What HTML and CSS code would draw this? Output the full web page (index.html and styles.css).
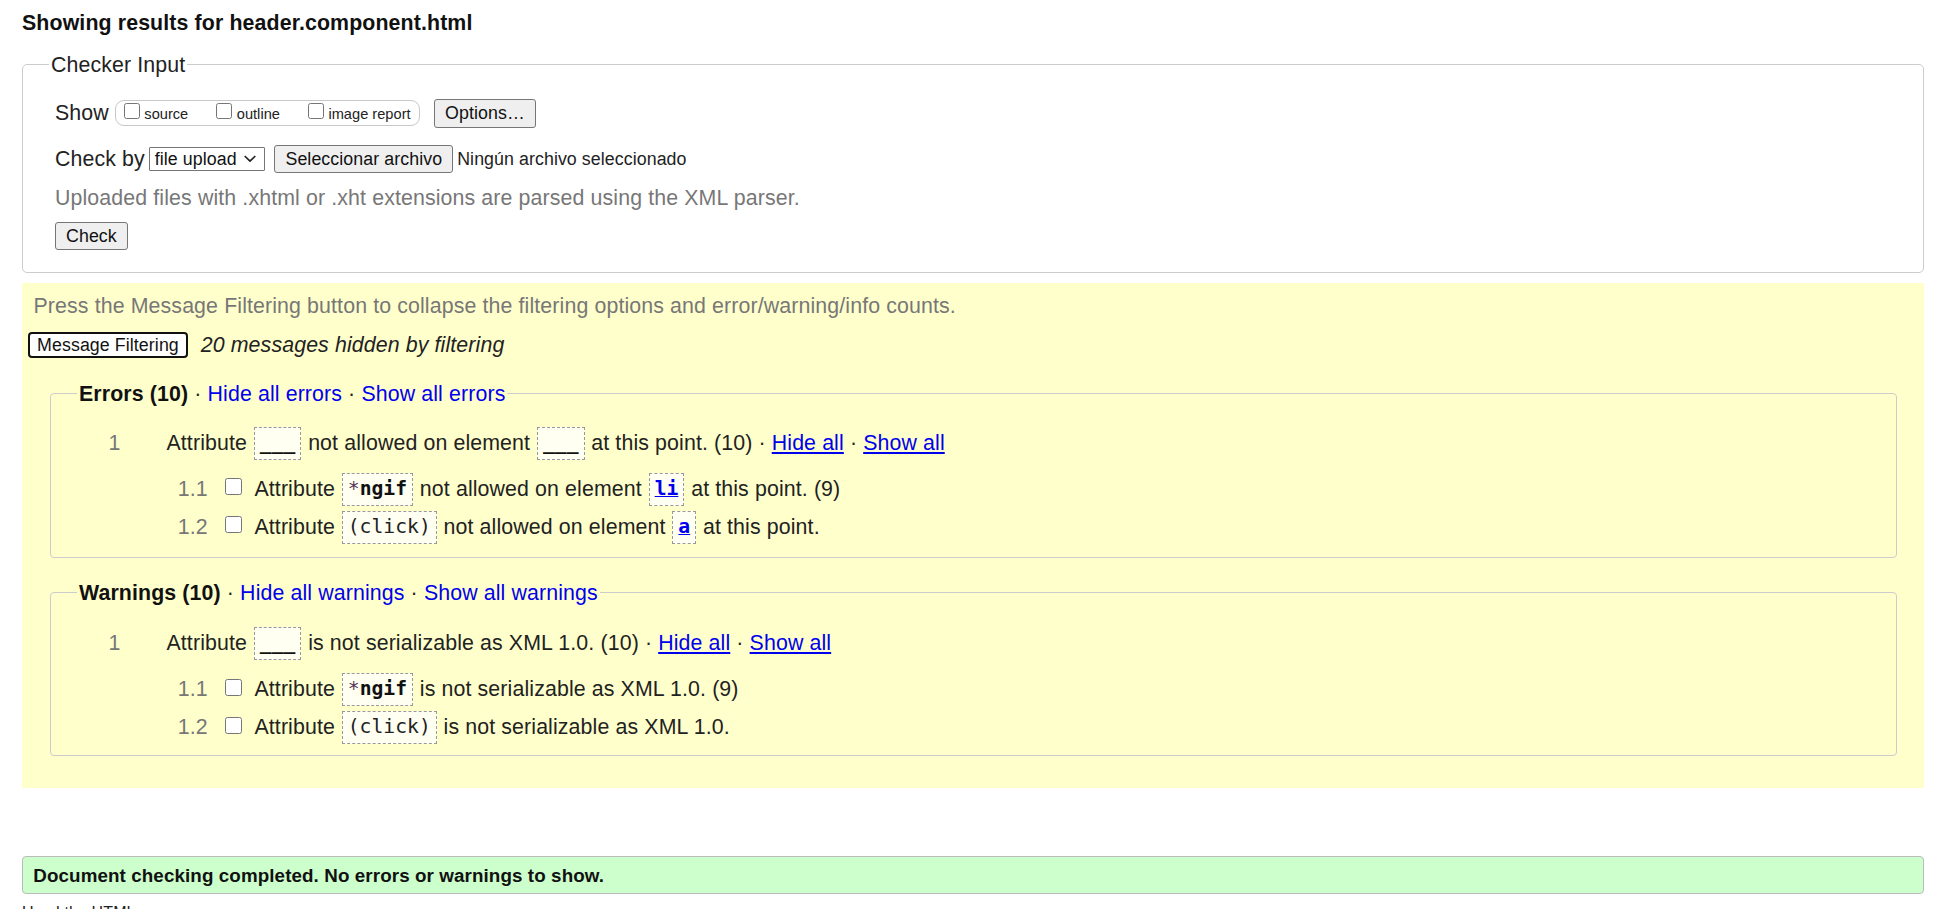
FILE: index.html
```html
<!DOCTYPE html>
<html lang="en">
<head>
<meta charset="utf-8">
<title>Showing results for header.component.html - Nu Html Checker</title>
<link rel="stylesheet" href="styles.css">
</head>
<body>
<div class="page">
  <h2 class="title">Showing results for header.component.html</h2>

  <fieldset class="input-box">
    <legend>Checker Input</legend>
    <div class="row show-row">
      <span class="lbl">Show</span>
      <span class="show-group">
        <label class="opt"><input type="checkbox"><span>source</span></label>
        <label class="opt"><input type="checkbox"><span>outline</span></label>
        <label class="opt"><input type="checkbox"><span>image report</span></label>
      </span>
      <button class="btn btn-options" type="button">Options…</button>
    </div>
    <div class="row checkby-row">
      <span class="lbl">Check by</span>
      <span class="select">
        <span class="select-value">file upload</span>
        <svg class="chevron" width="12" height="8" viewBox="0 0 12 8" aria-hidden="true"><path d="M1.2 1.5 L6 6.2 L10.8 1.5" fill="none" stroke="#222" stroke-width="1.7" stroke-linecap="round" stroke-linejoin="round"/></svg>
      </span>
      <button class="btn btn-file" type="button">Seleccionar archivo</button>
      <span class="file-status">Ningún archivo seleccionado</span>
    </div>
    <p class="hint">Uploaded files with .xhtml or .xht extensions are parsed using the XML parser.</p>
    <div class="row check-row">
      <button class="btn btn-check" type="submit">Check</button>
    </div>
  </fieldset>

  <section class="filters">
    <p class="filter-hint">Press the Message Filtering button to collapse the filtering options and error/warning/info counts.</p>
    <div class="filter-row">
      <button class="btn-filter" type="button">Message Filtering</button>
      <em class="hidden-count">20 messages hidden by filtering</em>
    </div>

    <fieldset class="group errors">
      <legend><strong>Errors (10)</strong> · <a href="#">Hide all errors</a> · <a href="#">Show all errors</a></legend>
      <div class="msg main">
        <span class="num">1</span>
        <span>Attribute</span>
        <code class="c blank">___</code>
        <span>not allowed on element</span>
        <code class="c blank">___</code>
        <span>at this point. (10) · <a class="ul" href="#">Hide all</a> · <a class="ul" href="#">Show all</a></span>
      </div>
      <div class="msg sub">
        <span class="num">1.1</span>
        <input type="checkbox">
        <span>Attribute</span>
        <code class="c"><span class="star">*</span><b>ngif</b></code>
        <span>not allowed on element</span>
        <code class="c"><a class="ul code-link" href="#">li</a></code>
        <span>at this point. (9)</span>
      </div>
      <div class="msg sub">
        <span class="num">1.2</span>
        <input type="checkbox">
        <span>Attribute</span>
        <code class="c">(click)</code>
        <span>not allowed on element</span>
        <code class="c"><a class="ul code-link" href="#">a</a></code>
        <span>at this point.</span>
      </div>
    </fieldset>

    <fieldset class="group warnings">
      <legend><strong>Warnings (10)</strong> · <a href="#">Hide all warnings</a> · <a href="#">Show all warnings</a></legend>
      <div class="msg main">
        <span class="num">1</span>
        <span>Attribute</span>
        <code class="c blank">___</code>
        <span>is not serializable as XML 1.0. (10) · <a class="ul" href="#">Hide all</a> · <a class="ul" href="#">Show all</a></span>
      </div>
      <div class="msg sub">
        <span class="num">1.1</span>
        <input type="checkbox">
        <span>Attribute</span>
        <code class="c"><span class="star">*</span><b>ngif</b></code>
        <span>is not serializable as XML 1.0. (9)</span>
      </div>
      <div class="msg sub">
        <span class="num">1.2</span>
        <input type="checkbox">
        <span>Attribute</span>
        <code class="c">(click)</code>
        <span>is not serializable as XML 1.0.</span>
      </div>
    </fieldset>
  </section>

  <p class="success">Document checking completed. No errors or warnings to show.</p>
  <p class="parser-note">Used the HTML parser.</p>
</div>
</body>
</html>
```

FILE: styles.css
```css
* {
  box-sizing: border-box;
}

html,
body {
  margin: 0;
  padding: 0;
  background: #ffffff;
}

body {
  font-family: "Liberation Sans", Arial, sans-serif;
  font-size: 21.33px;
  letter-spacing: 0.12px;
  color: #222222;
}

.page {
  padding: 11.2px 27px 0 22px;
}

.title {
  margin: 0;
  font-size: 21.33px;
  line-height: 24.5px;
  font-weight: bold;
  color: #111111;
}

fieldset {
  margin: 0;
  min-width: 0;
}

legend {
  padding: 0 2px;
  line-height: 24.5px;
}

/* ---------- Checker input ---------- */

.input-box {
  margin-top: 17px;
  border: 1px solid #cccccc;
  border-radius: 5px;
  padding: 22px 26px 22.2px 26px;
}

.row {
  display: flex;
  align-items: center;
  margin-left: 6px;
}

.show-row {
  height: 28.4px;
}

.lbl {
  line-height: 24.5px;
}

.show-row .lbl {
  margin-right: 6.3px;
}

.show-group {
  display: inline-flex;
  align-items: flex-end;
  height: 26px;
  border: 1px solid #c8c8c8;
  border-radius: 9px;
  padding: 0 8px 2.7px 7.7px;
  gap: 28px;
  margin-right: 14.5px;
}

.opt {
  display: flex;
  align-items: flex-end;
  gap: 4.5px;
  font-size: 14.6px;
  letter-spacing: 0.02px;
  line-height: 16.8px;
  color: #222222;
}

.opt input {
  width: 16px;
  height: 16px;
  margin: 0 0 4px 0;
}

.btn {
  font-family: "Liberation Sans", Arial, sans-serif;
  font-size: 17.78px;
  letter-spacing: 0.09px;
  color: #111111;
  background: #efefef;
  border: 1px solid #767676;
  border-radius: 3px;
  padding: 0 10px;
  height: 28.4px;
  line-height: 20px;
}

.checkby-row {
  margin-top: 17.8px;
  height: 28px;
}

.checkby-row .lbl {
  margin-right: 4.3px;
}

.select {
  display: inline-flex;
  align-items: center;
  justify-content: space-between;
  width: 115.6px;
  height: 24px;
  border: 1px solid #767676;
  border-radius: 1px;
  background: #ffffff;
  padding: 0 7.4px 0 4.6px;
  font-size: 17.78px;
  letter-spacing: 0.09px;
  color: #111111;
  margin-right: 9.7px;
}

.chevron {
  display: block;
}

.btn-file {
  height: 28px;
}

.file-status {
  margin-left: 4px;
  font-size: 17.78px;
  letter-spacing: 0.08px;
  color: #222222;
}

.hint {
  margin: 12.5px 0 0 6px;
  line-height: 24.5px;
  color: #777777;
}

.check-row {
  margin-top: 12px;
}

.btn-check {
  height: 27.7px;
}

/* ---------- Filtering / results ---------- */

.filters {
  margin-top: 9.4px;
  background: #ffffcc;
  padding: 11.3px 27px 31.5px 5.7px;
}

.filter-hint {
  margin: 0 0 0 5.8px;
  line-height: 24.5px;
  color: #777777;
}

.filter-row {
  display: flex;
  align-items: center;
  gap: 12.5px;
  margin-top: 13.8px;
  height: 26px;
}

.btn-filter {
  font-family: "Liberation Sans", Arial, sans-serif;
  font-size: 17.78px;
  letter-spacing: 0.09px;
  color: #111111;
  background: #ffffff;
  border: 2px solid #111111;
  border-radius: 4px;
  height: 26px;
  padding: 0 7.4px;
  line-height: 20px;
}

.hidden-count {
  line-height: 24.5px;
  color: #222222;
}

.group {
  margin: 23.3px 0 0 22.3px;
  border: 1px solid #cccccc;
  border-radius: 4px;
  padding: 21px 26px 13.5px 26px;
}

.group.warnings {
  margin-top: 22.5px;
  padding-top: 22.2px;
  padding-bottom: 11.5px;
}

.group legend strong {
  color: #111111;
}

.group legend a {
  color: #0000ee;
  text-decoration: none;
}

.msg {
  display: flex;
  align-items: center;
  column-gap: 6.8px;
  height: 32.5px;
  white-space: nowrap;
}

.msg.main {
  padding-left: 31.5px;
}

.msg.main .num {
  width: 51.2px;
}

.msg.sub {
  padding-left: 100.7px;
}

.msg.sub .num {
  width: 40.9px;
}

.msg.main + .msg.sub {
  margin-top: 13.7px;
}

.msg.sub + .msg.sub {
  margin-top: 5.4px;
}

.num {
  flex: 0 0 auto;
  color: #777777;
}

.msg input[type="checkbox"] {
  width: 17px;
  height: 17px;
  margin: 0 5.3px 5px 0;
  flex: 0 0 auto;
}

a {
  color: #0000ee;
}

a.ul {
  text-decoration: underline;
}

.c {
  display: inline-block;
  height: 32.5px;
  line-height: 30.5px;
  padding: 0 5px;
  border: 1px dashed #999999;
  background: #fffff2;
  font-family: "DejaVu Sans Mono", "Liberation Mono", monospace;
  font-size: 19.7px;
  letter-spacing: 0;
  color: #222222;
}

.c.blank {
  font-weight: bold;
  color: #111111;
}

.c b {
  font-weight: bold;
  color: #111111;
}

.c .star {
  color: #553355;
}

.code-link {
  font-weight: bold;
}

/* ---------- Footer messages ---------- */

.success {
  margin: 68.3px 0 0 0;
  background: #ccffcc;
  border: 1px solid #bbbbbb;
  border-radius: 4px;
  padding: 7.35px 10.3px;
  font-size: 18.8px;
  letter-spacing: 0.1px;
  line-height: 21.6px;
  font-weight: bold;
  color: #111111;
}

.parser-note {
  margin: 10px 0 0 0;
  font-size: 16px;
  line-height: 18.4px;
  color: #222222;
}
```
